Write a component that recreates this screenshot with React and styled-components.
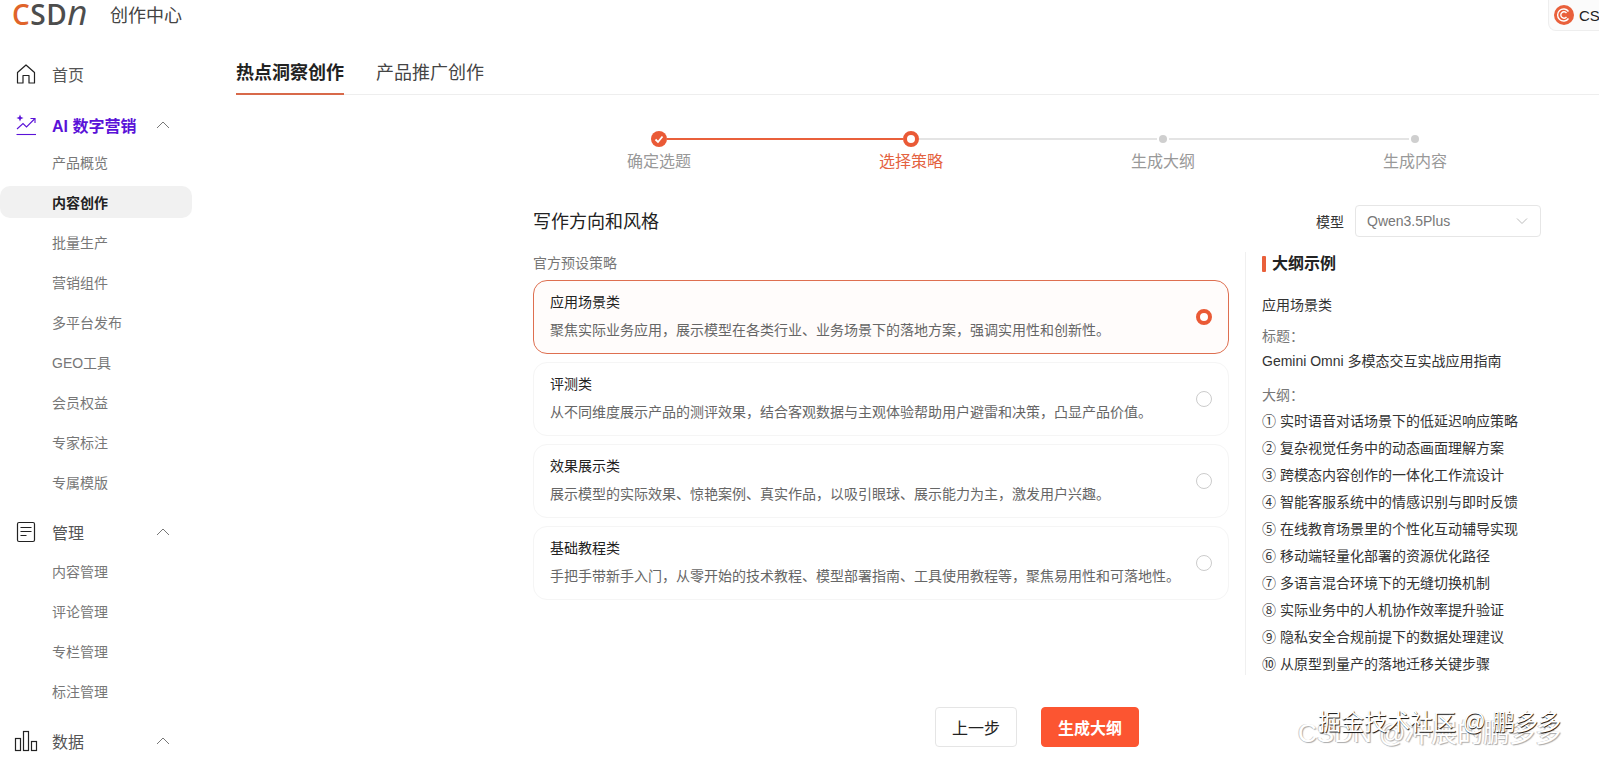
import React from 'react';
import styled, { createGlobalStyle } from 'styled-components';

const GlobalStyle = createGlobalStyle`
  html, body {
    margin: 0;
    padding: 0;
    background: #fff;
    overflow: hidden;
  }
  body {
    font-family: "Liberation Sans", "Noto Sans CJK SC", sans-serif;
    font-size: 14px;
    color: #222;
  }
`;

const Page = styled.div`
  position: relative;
  width: 1599px;
  height: 760px;
  overflow: hidden;
  display: flex;
  flex-direction: column;
`;

const TopBar = styled.header`
  flex: none;
  height: 30px;
  display: flex;
  align-items: flex-start;
  justify-content: space-between;
`;

const Brand = styled.div`
  display: flex;
  align-items: center;
  height: 28px;
  padding-left: 12px;
`;

const Logo = styled.span`
  width: 98px;
  font-size: 28px;
  line-height: 28px;
  font-weight: 600;
  letter-spacing: 0.5px;
  color: #4d4d4d;
  font-family: "Open Sans", "Liberation Sans", sans-serif;

  b {
    font-weight: 600;
    color: #e0642a;
  }
  i {
    font-size: 35px;
    font-weight: 500;
    line-height: 0;
  }
`;

const BrandName = styled.span`
  font-size: 18px;
  color: #444;
`;

const UserPill = styled.div`
  width: 51px;
  height: 31px;
  box-sizing: border-box;
  padding-left: 5px;
  display: flex;
  align-items: center;
  gap: 5px;
  overflow: hidden;
  background: #fbfbfb;
  border-left: 1px solid #eee;
  border-bottom: 1px solid #eee;
  border-bottom-left-radius: 8px;
  font-size: 15px;
  color: #222;
  white-space: nowrap;
`;

const Body = styled.div`
  flex: 1;
  display: flex;
  min-height: 0;
`;

const Sidebar = styled.nav`
  flex: none;
  width: 192px;
  margin-right: 44px;
  padding-top: 25px;
  display: flex;
  flex-direction: column;
`;

const NavHead = styled.div`
  height: 37px;
  flex: none;
  display: flex;
  align-items: center;
  padding-left: 14px;
  font-size: 16px;
  color: ${p => (p.$accent ? '#5a12d8' : '#555')};
  font-weight: ${p => (p.$accent ? 700 : 400)};
  margin-bottom: ${p => (p.$accent ? -1 : 0)}px;
`;

const HomeHead = styled(NavHead)`
  margin-bottom: 2.5px;
`;

const NavIcon = styled.span`
  width: 24px;
  height: 24px;
  margin-right: 14px;
  display: flex;
  align-items: center;
  justify-content: center;
`;

const NavLabel = styled.span`
  width: 104px;
`;

const NavGroup = styled.div`
  flex: none;
  margin-top: 11.5px;
`;

const SubList = styled.div`
  display: flex;
  flex-direction: column;
`;

const SubItem = styled.div`
  height: 32px;
  margin: 4px 0;
  padding-left: 52px;
  display: flex;
  align-items: center;
  border-radius: 10px;
  font-size: 14px;
  color: ${p => (p.$active ? '#222' : '#777')};
  font-weight: ${p => (p.$active ? 700 : 400)};
  background: ${p => (p.$active ? '#f1f1f1' : 'transparent')};
`;

const Main = styled.main`
  flex: 1;
  min-width: 0;
`;

const Tabs = styled.div`
  height: 65px;
  box-sizing: border-box;
  display: flex;
  align-items: flex-end;
  gap: 32px;
  border-bottom: 1px solid #eee;
`;

const Tab = styled.div`
  font-size: 18px;
  line-height: 26px;
  padding-bottom: 7px;
  margin-bottom: -1px;
  color: ${p => (p.$active ? '#222' : '#444')};
  font-weight: ${p => (p.$active ? 700 : 400)};
  border-bottom: 2px solid ${p => (p.$active ? '#d8694a' : 'transparent')};
`;

const Content = styled.div`
  width: 1008px;
  margin-left: 297px;
`;

const Steps = styled.div`
  display: grid;
  grid-template-columns: repeat(4, 1fr);
  margin-top: 36px;
`;

const Step = styled.div`
  display: flex;
  flex-direction: column;
  align-items: center;
`;

const Track = styled.div`
  width: 100%;
  height: 16px;
  display: flex;
  align-items: center;
`;

const Line = styled.span`
  flex: 1;
  height: 2px;
  background: ${p => (p.$tone === 'on' ? '#e9603b' : p.$tone === 'off' ? '#e4e4e4' : 'transparent')};
`;

const DoneDot = styled.span`
  flex: none;
  width: 16px;
  height: 16px;
  border-radius: 50%;
  background: #ea5a36;
  display: flex;
  align-items: center;
  justify-content: center;
`;

const CurrentDot = styled.span`
  flex: none;
  width: 16px;
  height: 16px;
  box-sizing: border-box;
  border-radius: 50%;
  border: 4px solid #ea5a36;
  background: #fff;
`;

const TodoDot = styled.span`
  flex: none;
  width: 8px;
  height: 8px;
  margin: 0 2px;
  border-radius: 50%;
  background: #cfcfcf;
`;

const StepLabel = styled.div`
  margin-top: 3px;
  font-size: 16px;
  line-height: 24px;
  color: ${p => (p.$current ? '#e4623f' : '#999')};
`;

const TitleRow = styled.div`
  margin-top: 31px;
  height: 32px;
  display: flex;
  align-items: center;
  justify-content: space-between;
`;

const Title = styled.h2`
  margin: 0 0 2px;
  font-size: 18px;
  font-weight: 400;
  color: #222;
`;

const ModelPick = styled.div`
  display: flex;
  align-items: center;
  gap: 11px;
  font-size: 14px;
  color: #333;
`;

const Select = styled.div`
  width: 186px;
  height: 32px;
  box-sizing: border-box;
  padding: 0 11px;
  display: flex;
  align-items: center;
  justify-content: space-between;
  border: 1px solid #e6e6e6;
  border-radius: 4px;
  color: #777;
`;

const Columns = styled.div`
  margin-top: 16px;
  display: flex;
  align-items: flex-start;
`;

const Strategies = styled.section`
  flex: none;
  width: 696px;
`;

const SectionLabel = styled.div`
  font-size: 14px;
  line-height: 20px;
  color: #777;
`;

const CardList = styled.div`
  margin-top: 7px;
  display: flex;
  flex-direction: column;
  gap: 8px;
`;

const Card = styled.div`
  height: 74px;
  box-sizing: border-box;
  padding: 0 16px 2px;
  display: flex;
  align-items: center;
  justify-content: space-between;
  border-radius: 14px;
  border: 1px solid ${p => (p.$selected ? '#de6f50' : '#f5f5f5')};
  background: ${p => (p.$selected ? '#fffcfb' : '#fff')};
`;

const CardTitle = styled.div`
  font-size: 14px;
  line-height: 20px;
  color: #222;
`;

const CardDesc = styled.div`
  margin-top: 8px;
  font-size: 14px;
  line-height: 20px;
  color: #666;
  white-space: nowrap;
`;

const Radio = styled.span`
  flex: none;
  width: 16px;
  height: 16px;
  margin-top: 2px;
  box-sizing: border-box;
  border-radius: 50%;
  border: ${p => (p.$on ? '4px solid #ea5a36' : '1px solid #ccc')};
  background: #fff;
`;

const Outline = styled.aside`
  flex: none;
  width: 296px;
  height: 423px;
  margin-top: -1px;
  margin-left: 16px;
  box-sizing: border-box;
  padding-left: 16px;
  border-left: 1px solid #f0f0f0;
`;

const OutlineTitle = styled.h3`
  margin: 0;
  display: flex;
  align-items: center;
  gap: 6px;
  font-size: 16px;
  line-height: 24px;
  font-weight: 700;
  color: #222;

  &::before {
    content: '';
    width: 4px;
    height: 16px;
    border-radius: 1px;
    background: #e9603b;
  }
`;

const OutlineText = styled.div`
  margin-top: ${p => p.$top}px;
  font-size: 14px;
  line-height: 20px;
  color: ${p => (p.$muted ? '#777' : '#333')};
`;

const OutlineList = styled.ol`
  margin: 1.5px 0 0;
  padding: 0;
  list-style: none;
`;

const OutlineItem = styled.li`
  height: 27px;
  display: flex;
  align-items: center;
  gap: 4px;
  font-size: 14px;
  color: #333;
  white-space: nowrap;
`;

const Actions = styled.div`
  margin-top: 32px;
  display: flex;
  justify-content: center;
  gap: 24px;
`;

const Button = styled.button`
  width: ${p => (p.$primary ? 98 : 82)}px;
  height: 40px;
  padding: 0;
  box-sizing: border-box;
  border-radius: 4px;
  border: 1px solid ${p => (p.$primary ? '#fc5531' : '#e5e5e5')};
  background: ${p => (p.$primary ? '#fc5531' : '#fff')};
  color: ${p => (p.$primary ? '#fff' : '#222')};
  font: inherit;
  font-size: 16px;
  font-weight: ${p => (p.$primary ? 700 : 400)};
`;

const Watermark = styled.div`
  position: absolute;
  left: ${p => p.$x}px;
  top: ${p => p.$y}px;
  font-size: ${p => p.$size}px;
  line-height: 30px;
  white-space: nowrap;
  color: #fff;
  text-shadow: ${p => p.$shadow};
`;

const Chevron = ({ color = '#777', size = 14 }) => (
  <svg width={size} height={size} viewBox="0 0 14 14" fill="none" stroke={color} strokeWidth="1">
    <path d="M1 10 L7 4 L13 10" />
  </svg>
);

const ChevronDown = () => (
  <svg width="14" height="14" viewBox="0 0 14 14" fill="none" stroke="#bbb" strokeWidth="1">
    <path d="M2 4.5 L7 9.5 L12 4.5" />
  </svg>
);

const HomeIcon = () => (
  <svg width="22" height="22" viewBox="0 0 22 22" fill="none" stroke="#222" strokeWidth="1.2" strokeLinejoin="round">
    <path d="M2.5 9.5 L11 2 L19.5 9.5 V20 H14 V12.5 H8 V20 H2.5 Z" />
  </svg>
);

const TrendIcon = () => (
  <svg width="24" height="24" viewBox="0 0 24 24" fill="none" stroke="#5a12d8" strokeWidth="1.1">
    <path d="M3 16 L9 10.5 L12.5 14 L21 5.5" />
    <path d="M16.5 5.5 H21 V10" />
    <path d="M2.5 21.5 H22" />
    <path d="M6 1.5 L7 4 L9.5 5 L7 6 L6 8.5 L5 6 L2.5 5 L5 4 Z" fill="#5a12d8" stroke="none" />
  </svg>
);

const DocIcon = () => (
  <svg width="20" height="22" viewBox="0 0 20 22" fill="none" stroke="#222" strokeWidth="1.2">
    <rect x="1.5" y="1.5" width="17" height="19" rx="1.5" />
    <path d="M4.5 6.5 H15.5 M4.5 10.5 H15.5 M4.5 14.5 H10.5" />
  </svg>
);

const BarsIcon = () => (
  <svg width="24" height="22" viewBox="0 0 24 22" fill="none" stroke="#222" strokeWidth="1.2">
    <rect x="1.5" y="8.5" width="5" height="12" />
    <rect x="9.5" y="1.5" width="5" height="19" />
    <rect x="17.5" y="11.5" width="5" height="9" />
  </svg>
);

const CsdnBadge = () => (
  <svg width="20" height="20" viewBox="0 0 20 20" style={{ flex: 'none' }}>
    <circle cx="10" cy="10" r="10" fill="#e9603b" />
    <path d="M14.5 6.5 A6 6 0 1 0 14.5 13.5" fill="none" stroke="#fff" strokeWidth="1.4" />
    <path d="M12.5 8 A3.2 3.2 0 1 0 12.5 12" fill="none" stroke="#fff" strokeWidth="1.4" />
  </svg>
);

const navGroups = [
  {
    label: 'AI 数字营销',
    icon: <TrendIcon />,
    accent: true,
    items: ['产品概览', '内容创作', '批量生产', '营销组件', '多平台发布', 'GEO工具', '会员权益', '专家标注', '专属模版'],
  },
  {
    label: '管理',
    icon: <DocIcon />,
    items: ['内容管理', '评论管理', '专栏管理', '标注管理'],
  },
  { label: '数据', icon: <BarsIcon />, items: [] },
];

const steps = [
  { label: '确定选题', state: 'done', left: 'none', right: 'on' },
  { label: '选择策略', state: 'current', left: 'on', right: 'off' },
  { label: '生成大纲', state: 'todo', left: 'off', right: 'off' },
  { label: '生成内容', state: 'todo', left: 'off', right: 'none' },
];

const strategies = [
  { title: '应用场景类', desc: '聚焦实际业务应用，展示模型在各类行业、业务场景下的落地方案，强调实用性和创新性。' },
  { title: '评测类', desc: '从不同维度展示产品的测评效果，结合客观数据与主观体验帮助用户避雷和决策，凸显产品价值。' },
  { title: '效果展示类', desc: '展示模型的实际效果、惊艳案例、真实作品，以吸引眼球、展示能力为主，激发用户兴趣。' },
  { title: '基础教程类', desc: '手把手带新手入门，从零开始的技术教程、模型部署指南、工具使用教程等，聚焦易用性和可落地性。' },
];

const outline = [
  ['①', '实时语音对话场景下的低延迟响应策略'],
  ['②', '复杂视觉任务中的动态画面理解方案'],
  ['③', '跨模态内容创作的一体化工作流设计'],
  ['④', '智能客服系统中的情感识别与即时反馈'],
  ['⑤', '在线教育场景里的个性化互动辅导实现'],
  ['⑥', '移动端轻量化部署的资源优化路径'],
  ['⑦', '多语言混合环境下的无缝切换机制'],
  ['⑧', '实际业务中的人机协作效率提升验证'],
  ['⑨', '隐私安全合规前提下的数据处理建议'],
  ['⑩', '从原型到量产的落地迁移关键步骤'],
];

function StepDot({ state }) {
  if (state === 'done') {
    return (
      <DoneDot>
        <svg width="10" height="10" viewBox="0 0 10 10" fill="none" stroke="#fff" strokeWidth="1.8">
          <path d="M1.5 5.5 L4 8 L8.5 2.5" />
        </svg>
      </DoneDot>
    );
  }
  return state === 'current' ? <CurrentDot /> : <TodoDot />;
}

export default function App() {
  return (
    <Page>
      <GlobalStyle />
      <TopBar>
        <Brand>
          <Logo><b>C</b>SD<i>n</i></Logo>
          <BrandName>创作中心</BrandName>
        </Brand>
        <UserPill>
          <CsdnBadge />
          <span>CSDN</span>
        </UserPill>
      </TopBar>

      <Body>
        <Sidebar>
          <HomeHead>
            <NavIcon><HomeIcon /></NavIcon>
            <NavLabel>首页</NavLabel>
          </HomeHead>
          {navGroups.map(group => (
            <NavGroup key={group.label}>
              <NavHead $accent={group.accent}>
                <NavIcon>{group.icon}</NavIcon>
                <NavLabel>{group.label}</NavLabel>
                <Chevron />
              </NavHead>
              <SubList>
                {group.items.map(item => (
                  <SubItem key={item} $active={item === '内容创作'}>{item}</SubItem>
                ))}
              </SubList>
            </NavGroup>
          ))}
        </Sidebar>

        <Main>
          <Tabs>
            <Tab $active>热点洞察创作</Tab>
            <Tab>产品推广创作</Tab>
          </Tabs>

          <Content>
            <Steps>
              {steps.map(step => (
                <Step key={step.label}>
                  <Track>
                    <Line $tone={step.left} />
                    <StepDot state={step.state} />
                    <Line $tone={step.right} />
                  </Track>
                  <StepLabel $current={step.state === 'current'}>{step.label}</StepLabel>
                </Step>
              ))}
            </Steps>

            <TitleRow>
              <Title>写作方向和风格</Title>
              <ModelPick>
                <span>模型</span>
                <Select>
                  <span>Qwen3.5Plus</span>
                  <ChevronDown />
                </Select>
              </ModelPick>
            </TitleRow>

            <Columns>
              <Strategies>
                <SectionLabel>官方预设策略</SectionLabel>
                <CardList>
                  {strategies.map((s, i) => (
                    <Card key={s.title} $selected={i === 0}>
                      <div>
                        <CardTitle>{s.title}</CardTitle>
                        <CardDesc>{s.desc}</CardDesc>
                      </div>
                      <Radio $on={i === 0} />
                    </Card>
                  ))}
                </CardList>
              </Strategies>

              <Outline>
                <OutlineTitle>大纲示例</OutlineTitle>
                <OutlineText $top={19}>应用场景类</OutlineText>
                <OutlineText $top={11} $muted>标题：</OutlineText>
                <OutlineText $top={5}>Gemini Omni 多模态交互实战应用指南</OutlineText>
                <OutlineText $top={14} $muted>大纲：</OutlineText>
                <OutlineList>
                  {outline.map(([num, text]) => (
                    <OutlineItem key={num}>
                      <span>{num}</span>
                      <span>{text}</span>
                    </OutlineItem>
                  ))}
                </OutlineList>
              </Outline>
            </Columns>

            <Actions>
              <Button>上一步</Button>
              <Button $primary>生成大纲</Button>
            </Actions>
          </Content>
        </Main>
      </Body>

      <Watermark $x={1298} $y={718} $size={26} $shadow="1px 1px 1px #aaa, -1px 0 0 #ccc">CSDN @冲展的鹏多多</Watermark>
      <Watermark $x={1318} $y={707} $size={23} $shadow="0.7px 0.7px 0.7px #111">掘金技术社区 @ 鹏多多</Watermark>
    </Page>
  );
}
